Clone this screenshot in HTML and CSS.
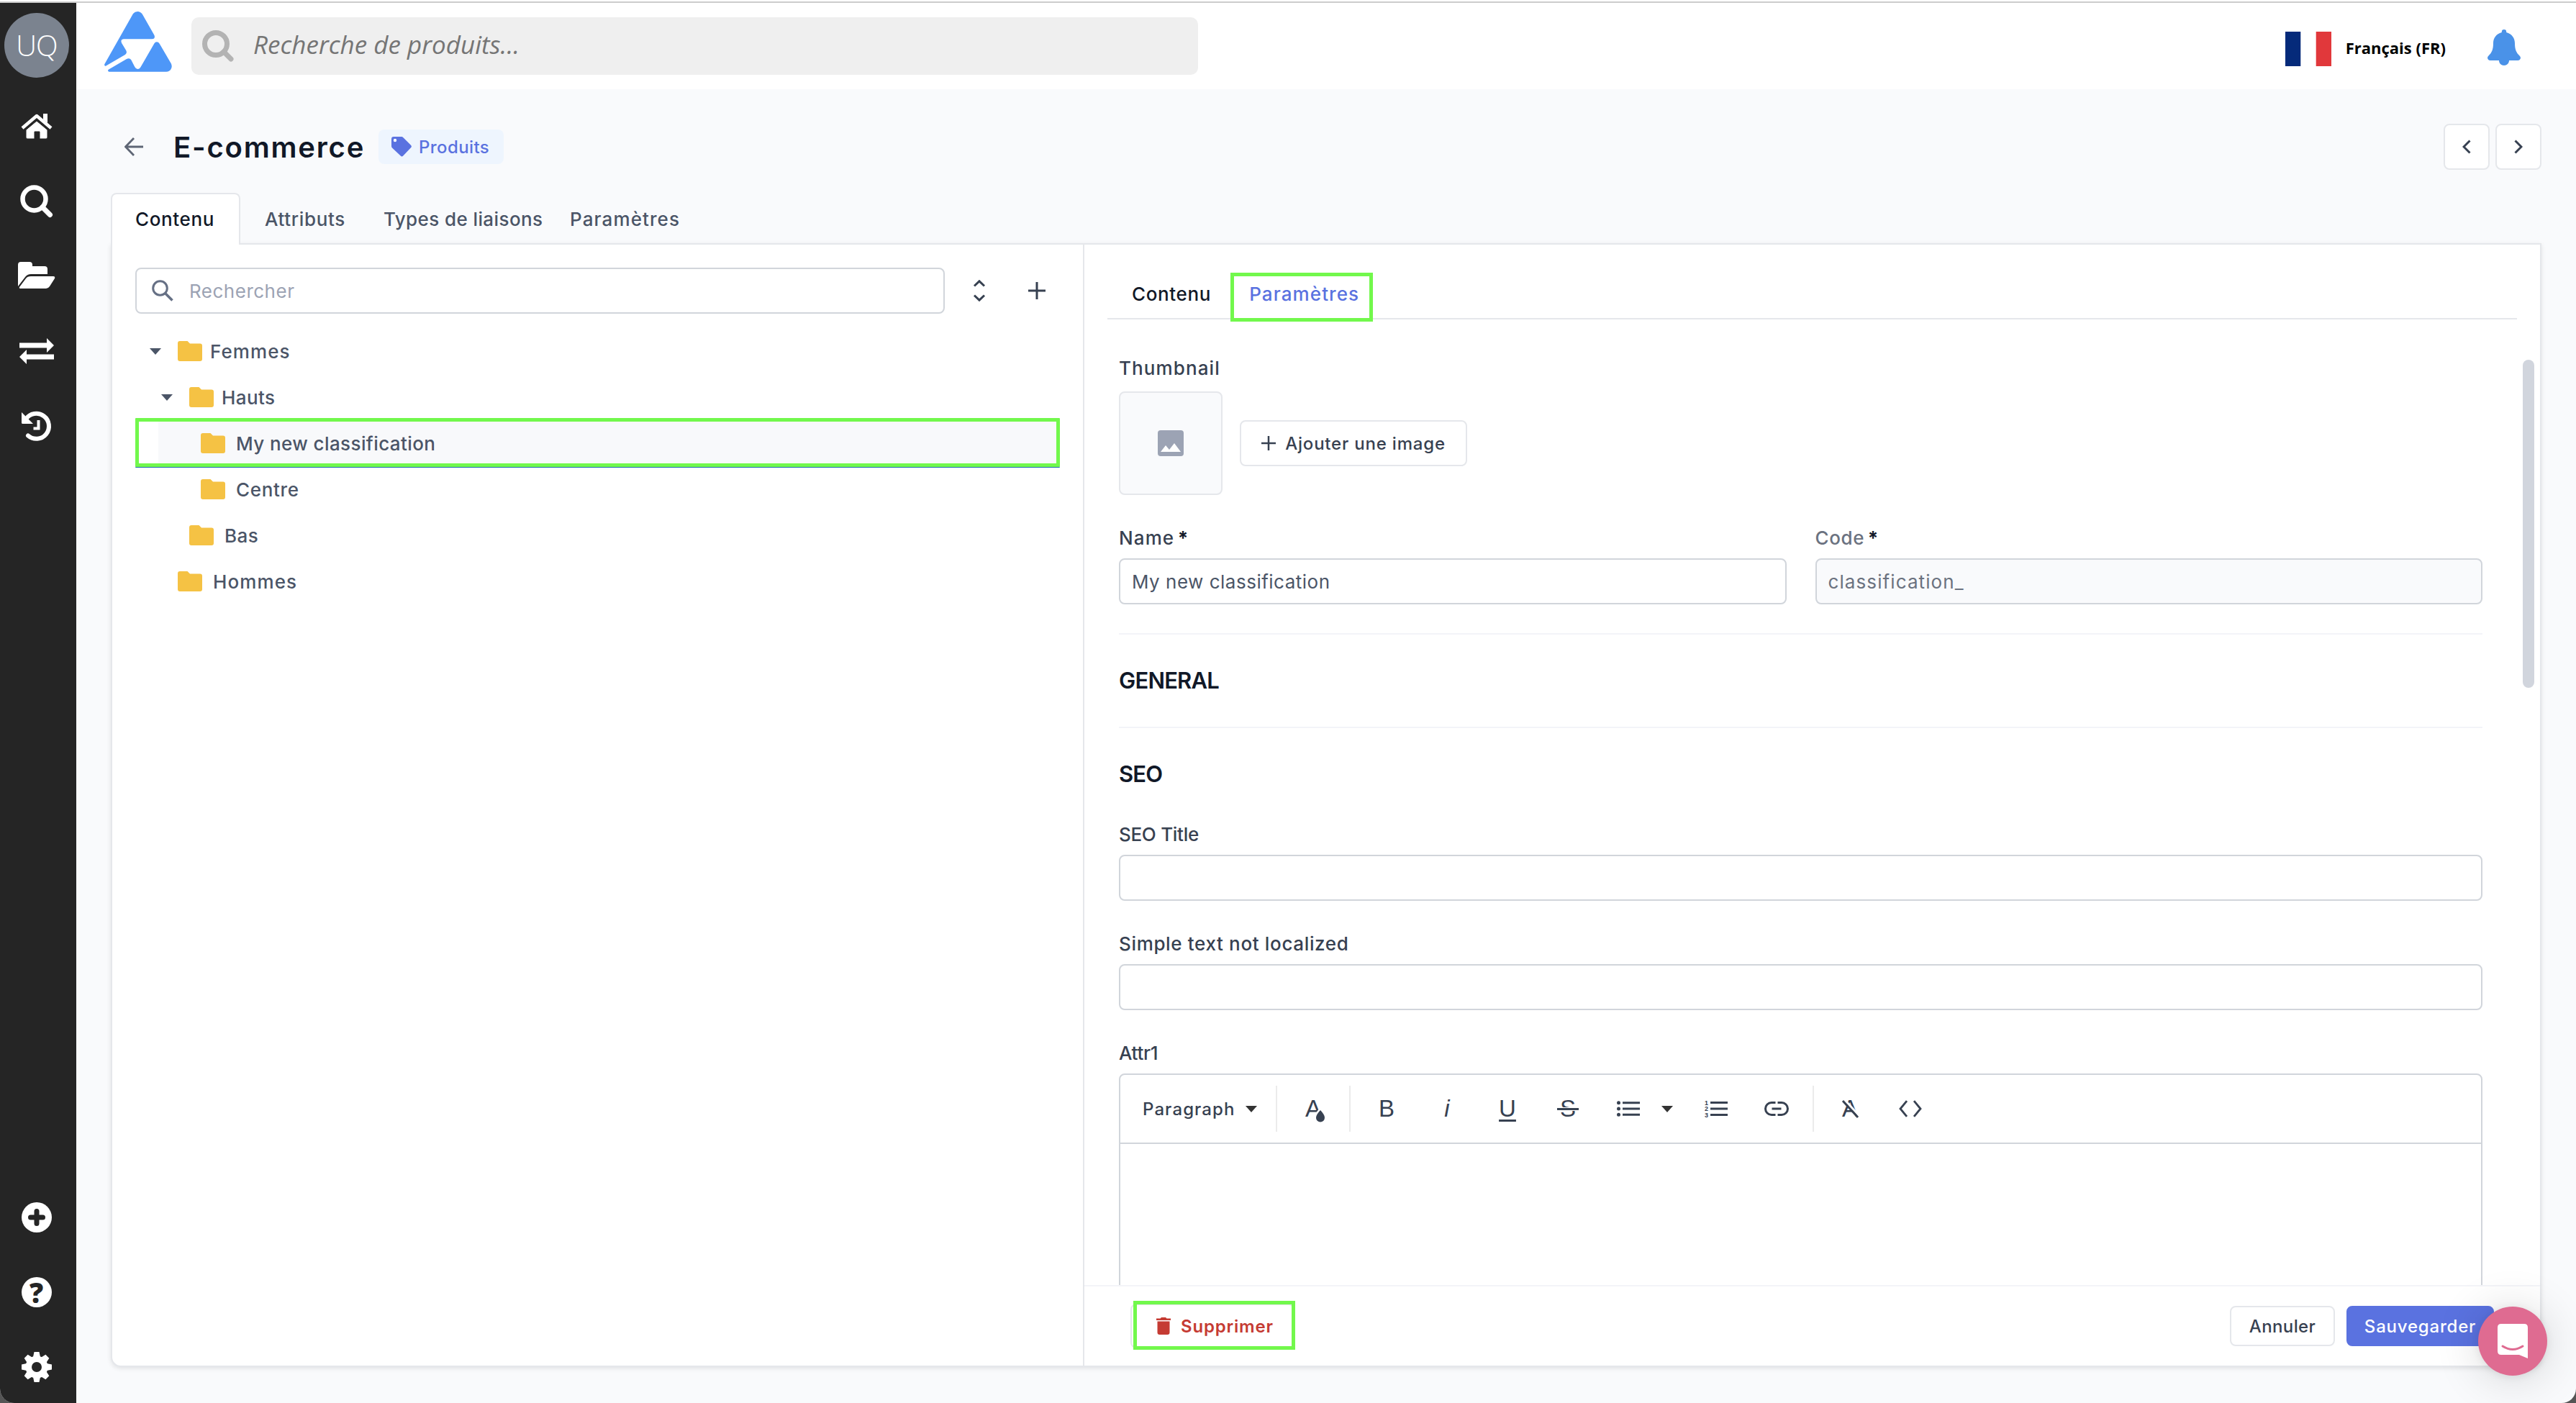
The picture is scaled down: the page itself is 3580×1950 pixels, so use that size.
FILE: index.html
```html
<!DOCTYPE html>
<html lang="fr">
<head>
  <meta charset="UTF-8">
  <meta name="viewport" content="width=device-width, initial-scale=1.0">
  <title>E-commerce</title>
  <link rel="stylesheet" href="styles.css">
</head>
<body>
  <div class="window">
    <nav class="sidebar">
      <div class="avatar">UQ</div>
      <div class="side-group">
        <a class="side-item"><svg width="44" height="36" viewBox="0 0 44 36"><path d="M31 0h6v13l-6-5z" fill="#fff"/><path d="M2 20 22 3l20 17" fill="none" stroke="#fff" stroke-width="4.500" stroke-linejoin="round"/><path d="M7 22.500 22 10l15 12.500V33a2 2 0 0 1-2 2h-9V25h-7v10h-10a2 2 0 0 1-2-2z" fill="#fff" stroke="#252525" stroke-width="1"/></svg></a>
        <a class="side-item"><svg width="46" height="46" viewBox="0 0 46 46"><circle cx="19.500" cy="19.500" r="16" fill="none" stroke="#fff" stroke-width="6.500"/><path d="M31 31l10.500 10.500" stroke="#fff" stroke-width="7" stroke-linecap="round"/></svg></a>
        <a class="side-item side-folder"><svg width="52" height="38" viewBox="0 0 52 38"><path d="M0 35V5a4 4 0 0 1 4-4h12a4 4 0 0 1 4 4v2h17a4 4 0 0 1 4 4v7H18q-5 0-8 4z" fill="#fff"/><path d="M18 21h31q3 0 2 3l-7 11q-2 3-5 3H4q-3 0-2-2l9-12q2-3 7-3z" fill="#fff"/></svg></a>
        <a class="side-item"><svg width="48" height="36" viewBox="0 0 48 36"><path d="M0 6.500h38V0l10 10-10 10v-6.500H0zM48 22.500H10V16L0 26l10 10v-6.500h38z" fill="#fff"/></svg></a>
        <a class="side-item"><svg width="44" height="44" viewBox="0 0 44 44"><path d="M7 12.500a17.500 17.500 0 1 1 3 23" fill="none" stroke="#fff" stroke-width="6" stroke-linecap="round"/><path d="M1 3v14.500q0 1.500 1.500 1.500H17z" fill="#fff"/><path d="M24.500 14v11.500h-7" fill="none" stroke="#fff" stroke-width="4"/></svg></a>
      </div>
      <div class="side-group side-bottom">
        <a class="side-item"><svg width="42" height="42" viewBox="0 0 42 42"><circle cx="21" cy="21" r="21" fill="#fff"/><path d="M21 12.500v17M12.500 21h17" stroke="#252525" stroke-width="7" stroke-linecap="round"/></svg></a>
        <a class="side-item"><span class="help">?</span></a>
        <a class="side-item"><svg width="42" height="42" viewBox="-21 -21 42 42"><g fill="#fff"><path id="tooth" d="M-5-14l1.500-7h7L5-14V14l-1.500 7h-7L-5 14z"/><use href="#tooth" transform="rotate(45)"/><use href="#tooth" transform="rotate(90)"/><use href="#tooth" transform="rotate(135)"/><circle r="15.500"/></g><circle r="7" fill="#252525"/></svg></a>
      </div>
    </nav>

    <div class="main">
      <header class="topbar">
        <svg class="logo" width="94" height="84" viewBox="0 0 94 84" fill="#4e97f8"><path d="M40 3Q42.500 0 46.300 0t6.400 3.500l16.800 29.500q1 2.300 0 4-1 1.300-3.500 1.300H27q-2.500 0-3.300 1.500-.7 1.700.3 4l6.200 10.200q1 1.800.6 3.500-.5 1.700-2.300 2.800L2.300 75.500Q0 76.300.1 73.500z"/><path d="M72.700 42.300q2.600 0 4 2.400l16.200 27.800q1.800 4.500-.4 7.800-2 3.400-6.500 3.400H6.500q-2.500-.7-.8-3L30.500 66.300q4.500-2.300 6.800 1l5 9.700q1.600 3 4 3t4-2.500L69.500 44.200q1.200-1.900 3.200-1.900z"/></svg>
        <div class="top-search">
          <svg width="46" height="46" viewBox="0 0 46 46"><circle cx="20" cy="20" r="15.500" fill="none" stroke="#b3b3b3" stroke-width="7"/><path d="M31 31l10 10" stroke="#b3b3b3" stroke-width="7" stroke-linecap="round"/></svg>
          <span class="top-placeholder">Recherche de produits...</span>
        </div>
        <div class="top-right">
          <svg width="64" height="48" viewBox="0 0 64 48"><path d="M0 0h21.300v48H0z" fill="#052a7a"/><path d="M42.700 0H64v48H42.700z" fill="#e1383b"/></svg>
          <span class="lang">Français (FR)</span>
          <svg class="bell" width="46" height="50" viewBox="0 0 46 50"><path d="M23 0a3.200 3.200 0 0 1 3.200 3.200v.8C34 6 38 12 38 19c0 9 2 13 6.500 17.500C47.500 39.500 45.500 43 42 43H30c0 4-3 7-7 7s-7-3-7-7H4c-3.500 0-5.500-3.500-2.500-6.500C6 32 8 28 8 19c0-7 4-13 11.800-15v-.8A3.200 3.200 0 0 1 23 0z" fill="#4a92e8"/></svg>
        </div>
      </header>

      <div class="page">
        <div class="page-head">
          <svg class="back" width="26" height="26" viewBox="0 0 26 26"><path d="M26 13H2M13 1 1.500 13 13 25" fill="none" stroke="#5f6675" stroke-width="2.800"/></svg>
          <h1>E-commerce</h1>
          <span class="badge"><svg width="28" height="28" viewBox="0 0 28 28"><path d="M3 0h11q1.300 0 2.200.9L27 11.700q1.800 1.800 0 3.600L16.300 26.500q-1.800 1.800-3.600 0L1 15.500Q0 14.500 0 13V3Q0 0 3 0z" fill="#5a72e0"/><circle cx="5" cy="5" r="2.200" fill="#fff"/></svg><span>Produits</span></span>
          <div class="pager">
            <button class="btn pager-btn"><svg width="12" height="20" viewBox="0 0 12 20"><path d="M10.500 1.500 2 10l8.500 8.500" fill="none" stroke="#374151" stroke-width="3"/></svg></button>
            <button class="btn pager-btn"><svg width="12" height="20" viewBox="0 0 12 20"><path d="M1.500 1.500 10 10l-8.500 8.500" fill="none" stroke="#374151" stroke-width="3"/></svg></button>
          </div>
        </div>

        <div class="tabs">
          <a class="tab active">Contenu</a>
          <a class="tab tab-attr">Attributs</a>
          <a class="tab tab-types tight">Types de liaisons</a>
          <a class="tab wide">Paramètres</a>
        </div>

        <div class="card">
          <section class="tree-pane">
            <div class="tree-tools">
              <div class="input tree-search">
                <svg width="30" height="30" viewBox="0 0 30 30"><circle cx="11.500" cy="11.500" r="9.800" fill="none" stroke="#667085" stroke-width="3"/><path d="M18.500 18.500 28.500 28.500" stroke="#667085" stroke-width="3.600"/></svg>
                <span>Rechercher</span>
              </div>
              <svg class="sort" width="18" height="30" viewBox="0 0 18 30"><path d="M2 8.500 9 1.800l7 6.700M2 21.500l7 6.700 7-6.700" fill="none" stroke="#374151" stroke-width="3"/></svg>
              <svg class="plus" width="24" height="24" viewBox="0 0 24 24"><path d="M12 0v24M0 12h24" stroke="#374151" stroke-width="3"/></svg>
            </div>

            <div class="tree">
              <div class="node level-1"><svg class="caret" width="16" height="9"><use href="#caret"/></svg><svg class="folder" width="34" height="28"><use href="#folder"/></svg><span class="wide">Femmes</span></div>
              <div class="node level-2"><svg class="caret" width="16" height="9"><use href="#caret"/></svg><svg class="folder" width="34" height="28"><use href="#folder"/></svg><span class="tight">Hauts</span></div>
              <div class="node level-3 selected"><svg class="folder" width="34" height="28"><use href="#folder"/></svg><span class="tight">My new classification</span><div class="mark mark-node"></div></div>
              <div class="node level-3"><svg class="folder" width="34" height="28"><use href="#folder"/></svg><span>Centre</span></div>
              <div class="node level-2 leaf"><svg class="folder" width="34" height="28"><use href="#folder"/></svg><span class="tight">Bas</span></div>
              <div class="node level-1 leaf"><svg class="folder" width="34" height="28"><use href="#folder"/></svg><span class="wide">Hommes</span></div>
            </div>
          </section>

          <section class="detail-pane">
            <div class="subtabs">
              <a class="subtab">Contenu</a>
              <a class="subtab current"><span class="wide">Paramètres</span><div class="mark mark-tab"></div></a>
            </div>

            <div class="form">
              <div class="label wide">Thumbnail</div>
              <div class="thumb-row">
                <div class="thumb"><svg width="36" height="36" viewBox="0 0 36 36"><path d="M4 0h28q4 0 4 4v28q0 4-4 4H4q-4 0-4-4V4q0-4 4-4z" fill="#9ca3b4"/><path d="M4 30 11 21l5 6 7-9 9 12z" fill="#fff"/></svg></div>
                <button class="btn btn-image"><svg width="20" height="20" viewBox="0 0 20 20"><path d="M10 0v20M0 10h20" stroke="#374151" stroke-width="2.500"/></svg><span>Ajouter une image</span></button>
              </div>

              <div class="two-cols">
                <div class="field">
                  <div class="label"><span class="wide">Name</span> <b>*</b></div>
                  <div class="input"><span>My new classification</span></div>
                </div>
                <div class="field">
                  <div class="label muted"><span>Code</span> <b>*</b></div>
                  <div class="input disabled"><span class="wide">classification_</span></div>
                </div>
              </div>

              <h2>GENERAL</h2>
              <h2>SEO</h2>

              <div class="field field-first">
                <div class="label narrow">SEO Title</div>
                <div class="input"></div>
              </div>
              <div class="field">
                <div class="label">Simple text not localized</div>
                <div class="input"></div>
              </div>
              <div class="field">
                <div class="label narrow">Attr1</div>
                <div class="editor">
                  <div class="toolbar">
                    <div class="tool-select"><span class="wide">Paragraph</span><svg width="16" height="9"><use href="#caret-dark"/></svg></div>
                    <i class="sep"></i>
                    <div class="tool"><span class="glyph">A</span><svg class="drop" width="20" height="24" viewBox="0 0 20 24"><path d="M10 5c3.500 4 6 7 6 10.500a6 6 0 0 1-12 0C4 12 6.500 9 10 5z" fill="#374151" stroke="#fff" stroke-width="5" paint-order="stroke"/></svg></div>
                    <i class="sep"></i>
                    <div class="tool"><span class="glyph">B</span></div>
                    <div class="tool"><span class="glyph italic">i</span></div>
                    <div class="tool"><span class="glyph under">U</span></div>
                    <div class="tool"><span class="glyph">S</span><i class="strike"></i></div>
                    <div class="tool"><svg width="32" height="22" viewBox="0 0 32 22" fill="#374151"><circle cx="2.500" cy="2.700" r="2.500"/><circle cx="2.500" cy="11" r="2.500"/><circle cx="2.500" cy="19.300" r="2.500"/><path d="M8 1.200h24v3H8zM8 9.500h24v3H8zM8 17.800h24v3H8z"/></svg></div>
                    <svg class="list-caret" width="16" height="9"><use href="#caret-dark"/></svg>
                    <div class="tool"><svg width="32" height="36" viewBox="0 -6 32 36" fill="#374151"><text class="digit" x="0" y="7">1</text><text class="digit" x="0" y="15.200">2</text><text class="digit" x="0" y="23.500">3</text><path d="M8 2h24v3H8zM8 10.500h24v3H8zM8 19h24v3H8z"/></svg></div>
                    <div class="tool"><svg width="34" height="20" viewBox="0 -1 34 20"><path d="M15.500 .5H10a8.500 8.500 0 0 0 0 17h5.500M18.500 .5H24a8.500 8.500 0 0 1 0 17h-5.500M10.500 9h13" fill="none" stroke="#374151" stroke-width="3"/></svg></div>
                    <i class="sep"></i>
                    <div class="tool"><span class="glyph">A</span><svg class="slash" width="26" height="28" viewBox="0 0 26 28"><path d="M5 1l20 22" stroke="#fff" stroke-width="3"/><path d="M2 2l21 23" stroke="#374151" stroke-width="3"/></svg></div>
                    <div class="tool"><svg width="32" height="24" viewBox="0 0 32 24"><path d="M11 1.200 2 12l9 10.800M21 1.200 30 12l-9 10.800" fill="none" stroke="#374151" stroke-width="2.800"/></svg></div>
                  </div>
                </div>
              </div>
            </div>

            <div class="scrollbar"></div>

            <footer class="footer">
              <button class="btn btn-delete"><svg width="20" height="24" viewBox="0 0 20 24"><path d="M0 1.500h5.500L7 0h6l1.500 1.500H20V4H0zM1.500 5.500h17V21q0 3-3 3h-11q-3 0-3-3z" fill="#c53b33"/></svg><span>Supprimer</span><div class="mark mark-delete"></div></button>
              <button class="btn btn-cancel"><span class="tight">Annuler</span></button>
              <button class="btn btn-save"><span>Sauvegarder</span></button>
            </footer>
          </section>
        </div>
      </div>
    </div>

    <div class="chat"><svg width="42" height="48" viewBox="0 0 42 48"><path d="M5 0h32q5 0 5 5v43l-12-5H5q-5 0-5-5V5q0-5 5-5z" fill="#fff"/><path d="M7 31q14 9 28 0" fill="none" stroke="#df6b91" stroke-width="3" stroke-linecap="round"/></svg></div>
  </div>

  <svg class="defs" width="0" height="0">
    <symbol id="caret" viewBox="0 0 16 9"><path d="M0 0h16L8 9z" fill="#4b5567"/></symbol>
    <symbol id="caret-dark" viewBox="0 0 16 9"><path d="M0 0h16L8 9z" fill="#333"/></symbol>
    <symbol id="folder" viewBox="0 0 34 28"><path d="M3 0h10.500l3.500 3.500h14q3 0 3 3V25q0 3-3 3H3q-3 0-3-3V3q0-3 3-3z" fill="#f5c244"/></symbol>
  </svg>
</body>
</html>
```
FILE: styles.css
```css
* {
  box-sizing: border-box;
}

body {
  margin: 0;
  background-color: #555;
  font-family: Inter, "Open Sans", sans-serif;
  font-size: 26px;
  font-weight: 500;
  letter-spacing: 0.65px;
  color: #374151;
}

h1, h2 {
  margin: 0;
  font-weight: 600;
  color: #111827;
}

svg {
  display: block;
  flex: none;
}

.wide {
  letter-spacing: 1.1px;
}

.tight {
  letter-spacing: 0.4px;
}

.narrow {
  letter-spacing: -0.3px;
}

.window {
  position: relative;
  display: flex;
  width: 3580px;
  height: 1950px;
  padding-top: 4px;
  overflow: hidden;
  background: linear-gradient(#fff 2px, #ccc 2px, #ccc 4px, #f9fafc 4px);
  border-radius: 0 0 20px 20px;
}

/* left rail */
.sidebar {
  display: flex;
  flex-direction: column;
  flex: none;
  width: 106px;
  padding-top: 14px;
  background-color: #252525;
}

.avatar {
  width: 90px;
  height: 90px;
  margin: 0 0 16px 6px;
  border-radius: 50%;
  background-color: #7b838f;
  color: #fff;
  font: 300 40px/90px "Open Sans", "Noto Sans", sans-serif;
  letter-spacing: -1px;
  text-align: center;
}

.side-item {
  display: flex;
  align-items: center;
  justify-content: center;
  width: 102px;
  height: 104px;
}

.side-folder {
  padding-bottom: 5px;
}

.side-bottom {
  margin-top: auto;
  margin-bottom: -2px;
}

.help {
  width: 42px;
  height: 42px;
  border-radius: 50%;
  background-color: #fff;
  color: #252525;
  font: 800 38px/42px "Open Sans", sans-serif;
  text-align: center;
}

.main {
  display: flex;
  flex-direction: column;
  flex: 1;
}

/* top bar */
.topbar {
  display: flex;
  height: 120px;
  padding-left: 39px;
  background-color: #fff;
}

.logo {
  margin-top: 12px;
}

.top-search {
  display: flex;
  align-items: center;
  width: 1399px;
  height: 80px;
  margin: 20px 0 0 27px;
  padding-left: 14px;
  border-radius: 10px;
  background-color: #efefef;
}

.top-placeholder {
  margin-left: 26px;
  padding-bottom: 6px;
  color: #757575;
  font: italic 400 35px "Open Sans", "Noto Sans", sans-serif;
  letter-spacing: 0;
}

.top-right {
  display: flex;
  align-items: center;
  height: 128px;
  margin-left: auto;
  padding-right: 77px;
}

.lang {
  margin: 0 58px 0 20px;
  padding-bottom: 5px;
  color: #000;
  font: 700 22px "Open Sans", "Noto Sans", sans-serif;
  letter-spacing: 0;
}

.bell {
  margin-bottom: 4px;
}

.page {
  display: flex;
  flex-direction: column;
  flex: 1;
  padding: 48px 48px 50px;
}

.page-head {
  display: flex;
  align-items: center;
  height: 64px;
}

.back {
  margin-left: 19px;
}

h1 {
  flex: none;
  width: 285px;
  margin-left: 42px;
  font-size: 40px;
  letter-spacing: 1.8px;
  white-space: nowrap;
}

.badge {
  display: flex;
  align-items: center;
  width: 174px;
  height: 48px;
  padding-left: 18px;
  gap: 10px;
  border-radius: 8px;
  background-color: #eef5fe;
  color: #5a72e0;
  font-size: 24px;
  letter-spacing: 0.4px;
}

.pager {
  display: flex;
  gap: 8px;
  margin-left: auto;
}

.btn {
  display: flex;
  align-items: center;
  justify-content: center;
  padding: 0;
  border: 2px solid #e5e7eb;
  border-radius: 8px;
  background-color: #fff;
  color: #374151;
  font: 500 24px Inter, sans-serif;
  letter-spacing: 0.8px;
}

.pager-btn {
  width: 64px;
  height: 64px;
}

/* main tabs */
.tabs {
  display: flex;
  height: 72px;
  margin: 32px 0 -2px;
  position: relative;
  line-height: 74px;
}

.tab {
  padding-left: 34px;
  color: #4b5567;
}

.tab.active {
  width: 180px;
  padding-left: 32px;
  border: 2px solid #e5e7eb;
  border-bottom: none;
  border-radius: 8px 8px 0 0;
  background-color: #fff;
  color: #111827;
  line-height: 70px;
}

.tab-attr {
  width: 165px;
}

.tab-types {
  width: 259px;
}

.card {
  display: flex;
  flex: 1;
  border: 2px solid #e5e7eb;
  border-radius: 0 0 14px 14px;
  background-color: #fff;
  box-shadow: 0 2px 6px rgba(0, 0, 0, 0.1);
}

/* tree */
.tree-pane {
  width: 1351px;
  padding: 32px 32px 0;
  border-right: 2px solid #e5e7eb;
}

.tree-tools {
  display: flex;
  align-items: center;
}

.input {
  display: flex;
  align-items: center;
  height: 64px;
  padding-left: 16px;
  border: 2px solid #d1d5db;
  border-radius: 8px;
  background-color: #fff;
  color: #4b5567;
  font-weight: 400;
  letter-spacing: 0.5px;
}

.tree-search {
  width: 1125px;
  padding-left: 21px;
  gap: 22px;
  color: #9ca3b4;
}

.sort {
  margin-left: 39px;
}

.plus {
  margin-left: 59px;
}

.tree {
  margin-top: 20px;
}

.node {
  position: relative;
  display: flex;
  align-items: center;
  height: 64px;
  padding-right: 5px;
  color: #4b5567;
}

.level-1 { padding-left: 20px; }
.level-2 { padding-left: 36px; }
.level-3 { padding-left: 91px; }
.level-1.leaf { padding-left: 59px; }
.level-2.leaf { padding-left: 75px; }

.caret {
  margin-right: 23px;
}

.folder {
  margin-right: 11px;
}

.level-3 .folder,
.leaf .folder {
  margin-right: 15px;
}

.selected {
  background: linear-gradient(90deg, #fff 32px, #f8f9fb 32px);
}

/* green highlight frames */
.mark {
  position: absolute;
  border: 5px solid #72f84c;
}

.mark-node {
  left: 0;
  top: -3px;
  width: 1285px;
  height: 68px;
  border-radius: 1px;
  box-shadow: 0 1px 0 #1f6bb0;
}

.mark-tab {
  left: -26px;
  top: 39px;
  width: 198px;
  height: 68px;
}

.mark-delete {
  left: 2px;
  top: -6px;
  width: 225px;
  height: 68px;
}

/* detail */
.detail-pane {
  position: relative;
  display: flex;
  flex-direction: column;
  flex: 1;
}

.subtabs {
  display: flex;
  gap: 53px;
  height: 104px;
  margin: 0 32px;
  padding-left: 34px;
  border-bottom: 2px solid #e5e7eb;
  color: #111827;
  line-height: 138px;
}

.current {
  position: relative;
  color: #5a72e0;
}

.form {
  height: 1342px;
  padding: 50px 80px 0 48px;
  overflow: hidden;
}

.label {
  height: 36px;
  margin-bottom: 10px;
  line-height: 36px;
}

.label b {
  margin-left: -3px;
  color: #111827;
}

.muted {
  color: #6b7280;
}

.thumb-row {
  display: flex;
  align-items: center;
  gap: 24px;
  margin: 14px 0 42px;
}

.thumb {
  display: flex;
  align-items: center;
  justify-content: center;
  width: 144px;
  height: 144px;
  border: 2px solid #e5e7eb;
  border-radius: 8px;
  background-color: #f9fafc;
}

.btn-image {
  width: 316px;
  height: 64px;
  gap: 13px;
}

.two-cols {
  display: grid;
  grid-template-columns: 1fr 1fr;
  gap: 40px;
}

.field {
  margin-bottom: 42px;
}

.two-cols .field {
  margin-bottom: 40px;
}

.field-first {
  margin-top: 2px;
}

.disabled {
  background-color: #f9fafc;
  color: #6b7280;
}

h2 {
  height: 130px;
  border-top: 2px solid #f3f4f8;
  font-size: 31px;
  line-height: 128px;
  letter-spacing: -0.8px;
}

/* rich text editor */
.editor {
  height: 360px;
  border: 2px solid #d1d5db;
  border-radius: 8px;
  letter-spacing: 0;
}

.toolbar {
  display: flex;
  align-items: center;
  height: 96px;
  border-bottom: 2px solid #d1d5db;
}

.tool-select {
  display: flex;
  align-items: center;
  width: 208px;
  padding-left: 31px;
  gap: 14px;
  font-size: 24px;
}

.sep {
  width: 2px;
  height: 64px;
  margin: 0 8px;
  background-color: #ebebeb;
}

.tool {
  position: relative;
  display: flex;
  align-items: center;
  justify-content: center;
  width: 84px;
  height: 64px;
}

.glyph {
  font: 400 33px/40px "Liberation Sans", Arial, sans-serif;
}

.italic {
  font-style: italic;
}

.under {
  text-decoration: underline;
  text-decoration-thickness: 3px;
  text-underline-offset: 4px;
}

.strike {
  position: absolute;
  left: 27px;
  top: 31px;
  width: 30px;
  height: 3px;
  background-color: #374151;
  box-shadow: 0 0 0 1px #fff;
}

.drop {
  position: absolute;
  left: 42px;
  top: 29px;
}

.slash {
  position: absolute;
  left: 30px;
  top: 19px;
}

.digit {
  font: 700 9px "Liberation Sans", Arial, sans-serif;
}

.list-caret {
  margin: 0 18px 0 4px;
}

.scrollbar {
  position: absolute;
  right: 8px;
  top: 160px;
  width: 16px;
  height: 456px;
  border-radius: 8px;
  background-color: #d1d5dd;
}

/* footer */
.footer {
  display: flex;
  align-items: center;
  flex: 1;
  padding: 0 64px;
  border-top: 2px solid #f3f4f8;
}

.btn-delete {
  position: relative;
  justify-content: flex-start;
  width: 228px;
  height: 62px;
  padding-left: 34px;
  gap: 14px;
  color: #c53b33;
  font-weight: 600;
}

.btn-cancel {
  width: 146px;
  height: 56px;
  margin-left: auto;
}

.btn-save {
  width: 205px;
  height: 56px;
  margin-left: 16px;
  border-color: #5a72e0;
  background-color: #5a72e0;
  color: #fff;
}

.chat {
  position: absolute;
  right: 40px;
  bottom: 38px;
  display: flex;
  align-items: center;
  justify-content: center;
  width: 96px;
  height: 96px;
  border-radius: 50%;
  background-color: #df6b91;
  box-shadow: 0 2px 12px rgba(0, 0, 0, 0.08), 0 4px 64px rgba(0, 0, 0, 0.16);
}

.defs {
  position: absolute;
}
```
